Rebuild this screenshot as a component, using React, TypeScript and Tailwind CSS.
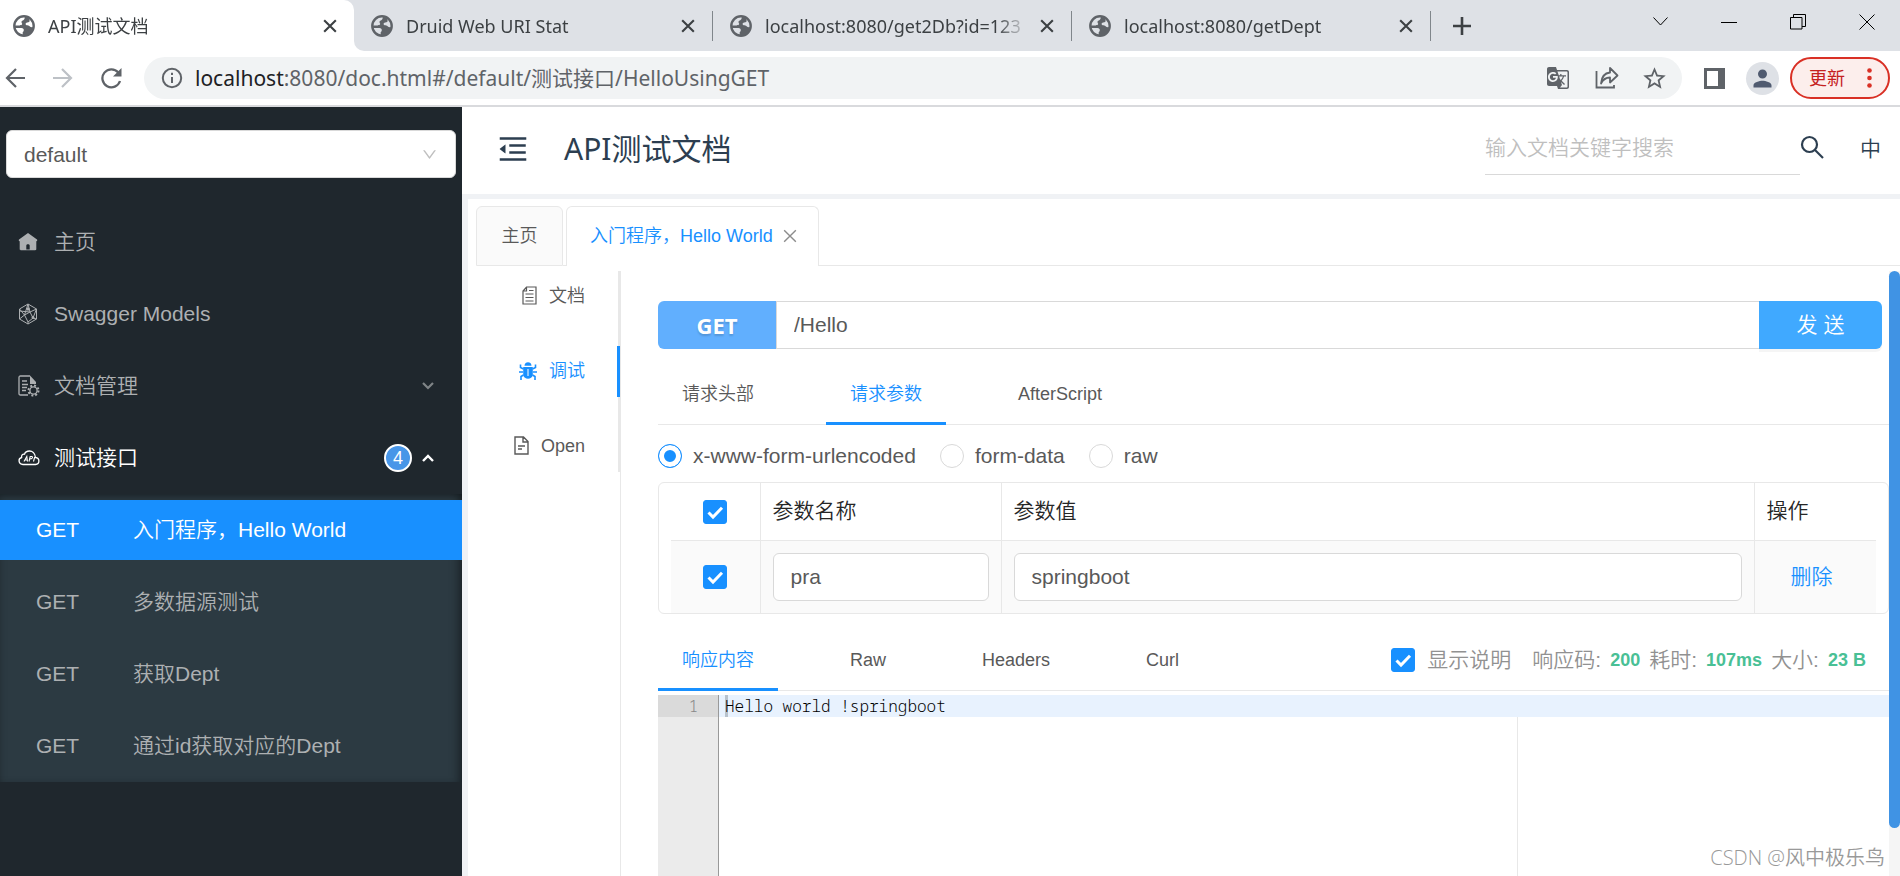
import { useState } from "react";
import type { ReactNode } from "react";
import { AiOutlineDown, AiOutlineMenuFold } from "react-icons/ai";
import { MdGTranslate, MdPerson, MdStarBorder } from "react-icons/md";

const browserTabs = [
  { title: "Druid Web URI Stat" },
  { title: "localhost:8080/get2Db?id=123" },
  { title: "localhost:8080/getDept" },
];

const apis = [
  { method: "GET", name: "入门程序，Hello World" },
  { method: "GET", name: "多数据源测试" },
  { method: "GET", name: "获取Dept" },
  { method: "GET", name: "通过id获取对应的Dept" },
];

const bodyTypes = ["x-www-form-urlencoded", "form-data", "raw"];

const stats = [
  { label: "响应码:", value: "200" },
  { label: "耗时:", value: "107ms" },
  { label: "大小:", value: "23 B" },
];

function Globe() {
  return (
    <svg viewBox="0 0 22 22" className="size-[22px] shrink-0">
      <circle cx="11" cy="11" r="9.7" fill="none" stroke="#5f6368" strokeWidth="2.4" />
      <path
        d="M12 1.5c-.4 1.600-.2 2.700-1.400 3.500-1 .6-2.100.8-2.100 2 0 1 .9 1.300.6 2.200-.3.800-1.500 1.200-2.600 1.200H1.800c0 1 .2 1.800.4 2.600H8.500c1.600 0 2.300 1 2.300 2.200 0 1.300-1.200 1.600-1.200 2.600 0 .9.500 1.500.4 2.900 5.500.8 10.300-3.400 10.500-8.800-1.600.6-3.100.3-3.900-.7-.7-.9-1.900-.8-3-1-1.300-.3-1.300-1.900-.2-2.500 1-.500 2.800-.2 3.200-1.400.3-1-.6-1.500-.2-2.700z"
        fill="#5f6368"
      />
    </svg>
  );
}

function Cross({ className }: { className: string }) {
  return (
    <svg viewBox="0 0 12 12" className={className} fill="none" stroke="currentColor">
      <path d="M1 1l10 10M11 1L1 11" />
    </svg>
  );
}

function BrowserTab({ title, active = false }: { title: string; active?: boolean }) {
  return (
    <div className="flex h-[51px] min-w-0 flex-1 items-center pl-[17px] pr-[13px]">
      <div className={`flex min-w-0 flex-1 items-center gap-[13px] ${active ? "-ml-1" : ""}`}>
        <Globe />
        <span className="min-w-0 flex-1 overflow-hidden whitespace-nowrap text-lg leading-6 text-[#3c4043] [mask-image:linear-gradient(to_right,black_88%,transparent)]">
          {title}
        </span>
      </div>
      <button aria-label="关闭标签页" className="ml-2 p-1 text-[#3c4043]">
        <Cross className="size-[14px] stroke-[1.8]" />
      </button>
    </div>
  );
}

function Browser() {
  return (
    <header className="border-b-2 border-[#d9dadd] bg-white font-['Noto_Sans','Noto_Sans_CJK_SC',sans-serif] font-normal">
      <div className="flex h-[51px]">
        <div className="flex w-[354px] bg-[#dee1e6]">
          <div className="flex flex-1 rounded-tr-[10px] bg-white">
            <BrowserTab title="API测试文档" active />
          </div>
        </div>
        <div className="flex flex-1 items-center rounded-bl-[10px] bg-[#dee1e6]">
          {browserTabs.map((t) => (
            <div key={t.title} className="flex w-[359px] items-center">
              <BrowserTab title={t.title} />
              <span className="h-[30px] w-px bg-[#80868b]" />
            </div>
          ))}
          <button aria-label="新标签页" className="ml-[22px] text-[#3c4043]">
            <svg viewBox="0 0 18 18" className="size-[18px]" stroke="currentColor" strokeWidth="2.6">
              <path d="M9 0v18M0 9h18" />
            </svg>
          </button>
          <div className="mb-2 ml-auto mr-[25px] flex items-center gap-[53px] text-black">
            <button aria-label="搜索标签页">
              <svg viewBox="0 0 15 9" className="h-[9px] w-[15px]" fill="none" stroke="currentColor">
                <path d="M.5.500l7 7.500 7-7.500" />
              </svg>
            </button>
            <button aria-label="最小化">
              <svg viewBox="0 0 16 16" className="size-4" stroke="currentColor">
                <path d="M0 8.500h16" />
              </svg>
            </button>
            <button aria-label="还原">
              <svg viewBox="0 0 16 16" className="size-4" fill="none" stroke="currentColor">
                <path d="M.5 3.500h11.500v11.500H.5zM3.500 3.500V.5h12v12h-3.500" />
              </svg>
            </button>
            <button aria-label="关闭">
              <svg viewBox="0 0 16 16" className="size-4" fill="none" stroke="currentColor">
                <path d="M.5.500l15 15M15.500.500l-15 15" />
              </svg>
            </button>
          </div>
        </div>
      </div>

      <div className="flex h-[54px] items-center pl-[5px] pr-[10px] text-[#5f6368]">
        <button aria-label="后退">
          <svg viewBox="0 0 20 20" className="size-5" fill="none" stroke="currentColor" strokeWidth="2.200">
            <path d="M20 10H2M11 1L2 10l9 9" />
          </svg>
        </button>
        <button aria-label="前进" className="ml-7 text-[#bdc1c6]">
          <svg viewBox="0 0 20 20" className="size-5" fill="none" stroke="currentColor" strokeWidth="2.200">
            <path d="M0 10h18M9 1l9 9-9 9" />
          </svg>
        </button>
        <button aria-label="重新加载" className="ml-7">
          <svg viewBox="0 0 21 21" className="size-[21px]" fill="none" stroke="currentColor" strokeWidth="2.300">
            <path d="M17.300 4.500A9 9 0 1 0 19 13" />
            <path d="M20.500 0v8.500H12z" fill="currentColor" stroke="none" />
          </svg>
        </button>
        <div className="ml-[22px] flex h-[42px] min-w-0 flex-1 items-center rounded-full bg-[#f1f3f4] pl-[17px] pr-[14px]">
          <svg viewBox="0 0 22 22" className="size-[22px] shrink-0" fill="none" stroke="currentColor" strokeWidth="2">
            <circle cx="11" cy="11" r="9.200" />
            <path d="M11 10v6M11 5.800v2.200" />
          </svg>
          <p className="ml-3 flex-1 truncate text-[21px] leading-8">
            <span className="text-[#202124]">localhost</span>:8080/doc.html#/default/测试接口/HelloUsingGET
          </p>
          <button aria-label="翻译此页">
            <MdGTranslate className="size-6" />
          </button>
          <button aria-label="分享" className="ml-[25px]">
            <svg viewBox="0 0 24 24" className="size-6" fill="none" stroke="currentColor" strokeWidth="1.800">
              <path d="M1.500 5v16.500H19V19" />
              <path d="M6 17.500C6.500 11 10 7 15 6.500V2l7.500 7.500-7.500 7v-5C11 11.500 8 13.500 6 17.500z" strokeLinejoin="round" />
            </svg>
          </button>
          <button aria-label="收藏" className="ml-[22px]">
            <MdStarBorder className="size-[27px]" />
          </button>
        </div>
        <button aria-label="侧边栏" className="ml-[22px]">
          <svg viewBox="0 0 21 21" className="size-[21px]" fill="currentColor">
            <path fillRule="evenodd" d="M0 0h21v21H0zM3 3v15h11V3z" />
          </svg>
        </button>
        <button aria-label="用户" className="ml-[21px] flex size-[33px] items-center justify-center rounded-full bg-[#dee1e6] text-[#505b70]">
          <MdPerson className="size-[27px]" />
        </button>
        <button className="ml-[11px] flex h-[42px] w-[100px] items-center justify-between rounded-full border-2 border-[#d93025] bg-[#fceeec] pl-[17px] pr-4 text-lg leading-6 text-[#c5221f]">
          更新
          <svg viewBox="0 0 5 20" className="h-5 w-[5px]" fill="#d93025">
            <circle cx="2.500" cy="2.500" r="2.300" />
            <circle cx="2.500" cy="10" r="2.300" />
            <circle cx="2.500" cy="17.500" r="2.300" />
          </svg>
        </button>
      </div>
    </header>
  );
}

function HomeIcon() {
  return (
    <svg viewBox="0 0 20 20" className="size-5" fill="currentColor">
      <path fillRule="evenodd" d="M10 1l9 6.500c.5.600.3 1.700-.7 1.700V17c0 .800-.4 1.200-1.100 1.200H2.800c-.7 0-1.100-.4-1.100-1.200V9.200C.7 9.200.5 8.100 1 7.500zM8.300 17.500h3.400V13.500c0-1.800-3.400-1.800-3.400 0z" />
    </svg>
  );
}

function ModelIcon() {
  return (
    <svg viewBox="0 0 20 22" className="h-[22px] w-5" fill="none" stroke="currentColor" strokeWidth="1">
      <path d="M10 1l8.500 5v10L10 21l-8.500-5V6z" />
      <path d="M10 1L6.500 12 1.500 6M10 1l2 8 6.500-3M6.500 12L12 9l3 6-5 4-3.500-7-5 4M12 9L1.500 8M15 15l3.500-9M15 15l3.500 1M10 19v2" />
      <circle cx="10" cy="6" r="1.200" fill="currentColor" />
      <circle cx="15" cy="14.500" r="1" fill="currentColor" />
    </svg>
  );
}

function DocSettingIcon() {
  return (
    <svg viewBox="0 0 22 22" className="size-[22px]" fill="none" stroke="currentColor" strokeWidth="1.300">
      <path d="M10 20H2.500C1.500 20 1 19.500 1 18.500V2.500C1 1.500 1.500 1 2.500 1H12" />
      <path d="M12 .500l6 6.500v2h-6z" fill="currentColor" stroke="none" />
      <path d="M4 6h5M4 9.500h6M4 12.500h5M4 15.500h4" />
      <circle cx="15.500" cy="15.500" r="3.600" />
      <circle cx="15.500" cy="15.500" r="5" strokeWidth="2" strokeDasharray="1.960 1.960" />
    </svg>
  );
}

function CloudApiIcon() {
  return (
    <svg viewBox="0 0 22 16" className="h-4 w-[22px]" fill="none" stroke="currentColor" strokeWidth="1.300">
      <path d="M5 14.500h12.500c4.500-.5 4.500-6.500 0-7C17 3 14 1 11.500 1 9 1 7 2.500 6.500 4.200 4.500 3.800 3.200 5.500 3.600 7.500 0 8.500 0 14 5 14.500z" />
      <path d="M6 11.500L8.800 6.500l.7 5M7 10h2.300M11 11.500l1.200-5h1.800c1 .5.500 2.500-2.300 2.500M15.500 11.500l1.200-4.500" strokeWidth="1.100" />
    </svg>
  );
}

function Check({ label, id }: { label: string; id: string }) {
  return (
    <span className="relative inline-flex size-6 align-middle">
      <input
        id={id}
        type="checkbox"
        defaultChecked
        aria-label={label}
        className="peer size-6 appearance-none rounded-[3px] border border-[#d9d9d9] bg-white checked:border-[#1890ff] checked:bg-[#1890ff]"
      />
      <svg
        viewBox="0 0 24 24"
        className="pointer-events-none absolute inset-0 hidden peer-checked:block"
        fill="none"
        stroke="white"
        strokeWidth="3"
      >
        <path d="M5.500 12.500l4.500 4.500L19 7.800" />
      </svg>
    </span>
  );
}

function Sidebar() {
  const [selected, setSelected] = useState(0);

  return (
    <aside className="w-[462px] shrink-0 bg-[#1f272d] text-[21px] leading-8 text-[#adb0b2]">
      <div className="relative mx-[6px] mt-[23px]">
        <select
          aria-label="分组"
          className="block h-12 w-full appearance-none rounded-md border border-[#d9d9d9] bg-white px-[17px] pt-[2px] text-[21px] text-[#595959]"
        >
          <option>default</option>
        </select>
        <AiOutlineDown className="pointer-events-none absolute right-[18px] top-4 size-[17px] text-[#bfbfbf]" />
      </div>

      <nav className="mt-[34px]">
        <a href="#home" className="mb-3 flex h-[60px] items-center gap-4 pl-[18px]">
          <HomeIcon />
          主页
        </a>
        <a href="#models" className="mb-3 flex h-[60px] items-center gap-4 pl-[18px]">
          <ModelIcon />
          Swagger Models
        </a>
        <button className="mb-3 flex h-[60px] w-full items-center gap-[14px] pl-[18px] pr-7">
          <DocSettingIcon />
          文档管理
          <svg viewBox="0 0 12 8" className="ml-auto h-2 w-3" fill="none" stroke="#7f8487" strokeWidth="2.200">
            <path d="M1 1l5 5 5-5" />
          </svg>
        </button>
        <button className="mb-[6px] flex h-[60px] w-full items-center gap-[14px] pl-[18px] pr-7 text-white">
          <CloudApiIcon />
          测试接口
          <span className="ml-auto flex items-center gap-[10px]">
            <span className="flex size-7 items-center justify-center rounded-full border-2 border-white bg-[#4896e8] text-lg leading-none">
              4
            </span>
            <svg viewBox="0 0 12 8" className="h-2 w-3" fill="none" stroke="currentColor" strokeWidth="2.400">
              <path d="M1 7l5-5 5 5" />
            </svg>
          </span>
        </button>
        <ul className="flex flex-col gap-3 bg-[#2c3a42] py-[6px] shadow-[inset_-8px_0_10px_-4px_rgba(0,0,0,0.3),inset_0_4px_8px_-2px_rgba(0,0,0,0.4)]">
          {apis.map((api, i) => (
            <li key={api.name}>
              <a
                href="#api"
                onClick={() => setSelected(i)}
                className={`flex h-[60px] items-center pl-9 ${selected === i ? "bg-[#1890ff] text-white" : ""}`}
              >
                <span className="w-[97px]">{api.method}</span>
                {api.name}
              </a>
            </li>
          ))}
        </ul>
      </nav>
    </aside>
  );
}

function TopBar() {
  return (
    <div className="flex h-[87px] items-center bg-white pb-1 pl-[34px] pr-[19px] text-[#2c3e50]">
      <button aria-label="折叠菜单">
        <AiOutlineMenuFold className="size-[34px]" />
      </button>
      <h1 className="ml-[34px] font-['Noto_Sans','Noto_Sans_CJK_SC',sans-serif] text-3xl leading-10 font-normal text-[#2c3e50]">
        API测试文档
      </h1>
      <input
        aria-label="搜索"
        placeholder="输入文档关键字搜索"
        className="ml-auto h-[52px] w-[315px] border-b border-[#d9d9d9] text-[21px] outline-none placeholder:text-[#bfbfbf]"
      />
      <button aria-label="搜索文档" className="mb-[3px]">
        <svg viewBox="0 0 24 24" className="size-6" fill="none" stroke="currentColor" strokeWidth="2.200">
          <circle cx="9.500" cy="9.500" r="7.500" />
          <path d="M15 15l8 8" />
        </svg>
      </button>
      <button className="ml-9 text-[21px] leading-8">中</button>
    </div>
  );
}

function SideTab({ icon, text, active = false }: { icon: ReactNode; text: string; active?: boolean }) {
  return (
    <button
      className={`-mr-[2px] flex h-[51px] items-center justify-end gap-3 border-r-[3px] pb-[2px] pr-8 ${
        active ? "border-[#1890ff] text-[#1890ff]" : "border-transparent"
      }`}
    >
      {icon}
      {text}
    </button>
  );
}

function LineTab({ text, active = false }: { text: string; active?: boolean }) {
  return (
    <button
      role="tab"
      aria-selected={active}
      className={`-mb-px h-[60px] border-b-[3px] px-6 pt-px ${active ? "border-[#1890ff] text-[#1890ff]" : "border-transparent"}`}
    >
      {text}
    </button>
  );
}

function Params() {
  return (
    <div className="rounded-md border border-[#e8e8e8] px-3">
      <table className="w-full table-fixed border-collapse text-[21px] leading-8 text-[#595959]">
        <thead>
          <tr className="h-[57px] text-left text-[#262626]">
            <th className="w-[89px] border-b border-r border-[#e8e8e8] pb-[2px] text-center font-[350]">
              <Check id="all" label="全选" />
            </th>
            <th className="w-[241px] border-b border-r border-[#e8e8e8] px-3 font-[350]">参数名称</th>
            <th className="border-b border-r border-[#e8e8e8] px-3 font-[350]">参数值</th>
            <th className="w-[122px] border-b border-[#e8e8e8] px-3 font-[350]">操作</th>
          </tr>
        </thead>
        <tbody>
          <tr className="h-[73px] bg-[#fafafa]">
            <td className="border-r border-[#e8e8e8] pb-[2px] text-center">
              <Check id="row" label="选择参数" />
            </td>
            <td className="border-r border-[#e8e8e8] px-3">
              <input
                aria-label="参数名称"
                defaultValue="pra"
                className="block h-12 w-full rounded-md border border-[#d9d9d9] bg-white px-[17px]"
              />
            </td>
            <td className="border-r border-[#e8e8e8] px-3">
              <input
                aria-label="参数值"
                defaultValue="springboot"
                className="block h-12 w-full rounded-md border border-[#d9d9d9] bg-white px-[17px]"
              />
            </td>
            <td className="px-9">
              <button className="whitespace-nowrap text-[#1890ff]">删除</button>
            </td>
          </tr>
        </tbody>
      </table>
    </div>
  );
}

function Response() {
  return (
    <>
      <div className="mt-[17px] flex items-center border-b border-[#e8e8e8]">
        <div role="tablist" className="flex gap-12">
          <LineTab text="响应内容" active />
          <LineTab text="Raw" />
          <LineTab text="Headers" />
          <LineTab text="Curl" />
        </div>
        <div className="ml-auto flex items-center gap-[9px] pb-[2px] pr-[23px] text-[21px] leading-8 text-[#919191]">
          <Check id="desc" label="显示说明" />
          <label htmlFor="desc" className="ml-[3px] mr-3">
            显示说明
          </label>
          {stats.map((s) => (
            <span key={s.label} className="flex items-center gap-[9px]">
              {s.label}
              <b className="text-lg leading-8 font-bold text-[#49c095]">{s.value}</b>
            </span>
          ))}
        </div>
      </div>
      <div className="mt-1 flex flex-1 font-['Noto_Sans_Mono','DejaVu_Sans_Mono',monospace] text-base leading-[22px] text-black">
        <div className="w-[61px] border-r border-[#999] bg-[#ebebeb]">
          <div className="bg-[#dadada] pr-5 text-right text-[#888]">1</div>
        </div>
        <div className="flex flex-1 flex-col">
          <pre className="bg-[#e8f2fe] pl-[6px] font-['Noto_Sans_Mono','DejaVu_Sans_Mono',monospace]">
            <span className="block shadow-[inset_3px_0_0_#b8c2cc]">Hello world !springboot</span>
          </pre>
          <div className="w-[799px] flex-1 border-r border-[#e8e8e8]" />
        </div>
      </div>
    </>
  );
}

function Debug() {
  const [bodyType, setBodyType] = useState(bodyTypes[0]);

  return (
    <main className="flex min-w-0 flex-1 flex-col border-l border-[#e8e8e8] pl-[37px] pt-[30px]">
      <div className="mr-[7px] flex h-12 text-[21px]">
        <span className="flex w-[118px] items-center justify-center rounded-l-md bg-[#61affe] font-['Open_Sans',sans-serif] text-[22px] font-bold text-white [text-shadow:0_2px_2px_rgba(0,0,0,0.15)]">
          GET
        </span>
        <input
          aria-label="接口地址"
          defaultValue="/Hello"
          className="min-w-0 flex-1 border-y border-l border-[#d9d9d9] px-[17px] text-[#595959]"
        />
        <button className="w-[123px] rounded-r-md bg-[#40a9ff] text-white shadow-[0_3px_0_rgba(0,0,0,0.04)]">发 送</button>
      </div>

      <div role="tablist" className="mt-4 flex gap-12 border-b border-[#e8e8e8]">
        <LineTab text="请求头部" />
        <LineTab text="请求参数" active />
        <LineTab text="AfterScript" />
      </div>

      <div className="flex h-[57px] items-center gap-6 pt-1 text-[21px] leading-8">
        {bodyTypes.map((t) => (
          <label key={t} className="flex items-center gap-[11px]">
            <input
              type="radio"
              name="bodyType"
              checked={bodyType === t}
              onChange={() => setBodyType(t)}
              className="size-6 appearance-none rounded-full border border-[#d9d9d9] bg-white checked:border-[#1890ff] checked:bg-[#1890ff] checked:shadow-[inset_0_0_0_5px_white]"
            />
            {t}
          </label>
        ))}
      </div>

      <Params />
      <Response />
    </main>
  );
}

export default function App() {
  return (
    <div className="flex min-h-screen flex-col bg-white font-['Liberation_Sans','Noto_Sans_CJK_SC',sans-serif] font-[350]">
      <Browser />
      <div className="flex flex-1">
        <Sidebar />
        <div className="flex min-w-0 flex-1 flex-col bg-[#f0f2f5]">
          <TopBar />
          <div className="ml-[6px] mt-[5px] flex flex-1 flex-col bg-white text-lg leading-7 text-[#595959]">
            <div className="flex pl-2 pt-[7px]">
              <button className="h-[60px] w-[87px] rounded-t-md border border-[#e8e8e8] bg-[#fafafa]">主页</button>
              <span className="w-[3px] border-b border-[#e8e8e8]" />
              <div className="flex h-[60px] items-center gap-[10px] rounded-t-md border border-b-0 border-[#e8e8e8] px-[23px] pb-[2px] text-[#1890ff]">
                入门程序，Hello World
                <button aria-label="关闭" className="-mr-[2px] text-[#8c8c8c]">
                  <Cross className="size-[14px] stroke-[1.2]" />
                </button>
              </div>
              <span className="flex-1 border-b border-[#e8e8e8]" />
            </div>

            <div className="mt-[5px] flex flex-1">
              <div className="w-[152px]">
                <div className="flex flex-col gap-6 border-r-2 border-[#e8e8e8]">
                  <SideTab
                    text="文档"
                    icon={
                      <svg viewBox="0 0 15 19" className="h-[19px] w-[15px]" fill="none" stroke="currentColor" strokeWidth="1.200">
                        <path d="M4.500 1H14v17H1V5zM4.500 1v4H1M7 4.500h4.500M3.500 8h8M3.500 11.500h8M3.500 15h8" />
                      </svg>
                    }
                  />
                  <SideTab
                    active
                    text="调试"
                    icon={
                      <svg viewBox="0 0 18 18" className="size-[18px]" fill="none" stroke="currentColor" strokeWidth="1.600">
                        <path d="M5.500 3.700C5.500-.8 12.500-.8 12.500 3.700z" fill="currentColor" stroke="none" />
                        <path d="M4.200 5h9.600v8c-1 5-8.600 5-9.600 0z" fill="currentColor" stroke="none" />
                        <path d="M0 10h4M14 10h4M4.500 7L1.500 5.500V2.500M13.500 7l3-1.500V2.500M4.500 13l-2.500 1.500V18M13.500 13l2.500 1.500V18" />
                        <path d="M9 7v7" stroke="white" strokeWidth="1" />
                      </svg>
                    }
                  />
                  <SideTab
                    text="Open"
                    icon={
                      <svg viewBox="0 0 15 19" className="h-[19px] w-[15px]" fill="none" stroke="currentColor" strokeWidth="1.400">
                        <path d="M1 1h8.500L14 5.500V18H1zM9 1v5h5M4 10h7M4 13h4" />
                      </svg>
                    }
                  />
                </div>
              </div>
              <Debug />
              <div className="w-[11px] bg-[#f5f5f5]">
                <div className="h-[92%] rounded-full bg-[#4093e4]" />
              </div>
            </div>
          </div>
        </div>
      </div>
      <p className="absolute bottom-1 right-[15px] font-['Open_Sans','Noto_Sans_CJK_SC',sans-serif] text-xl leading-7 text-[#999] [text-shadow:1px_1px_0_white]">
        CSDN @风中极乐鸟
      </p>
    </div>
  );
}
